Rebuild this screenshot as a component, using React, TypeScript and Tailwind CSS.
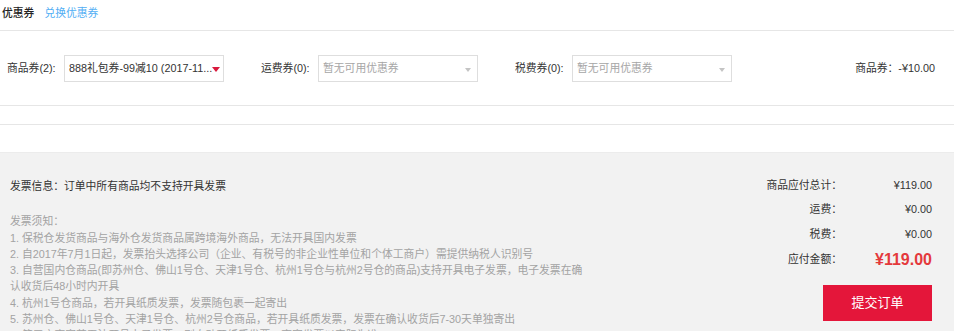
import React from 'react';

const FONT = { fontFamily: '"Liberation Sans", Arial, "Noto Sans CJK SC", sans-serif' };

interface CouponSelectProps {
  label: string;
  value?: string;
  placeholder?: string;
  active?: boolean;
}

function CouponSelect({ label, value, placeholder, active }: CouponSelectProps) {
  return (
    <div className="flex w-[254px] items-center">
      <span className="w-[57px] shrink-0 text-[#333]">{label}</span>
      <div className="relative flex h-[27px] w-[160px] items-center border border-[#dedede] bg-white pl-[4px]">
        {value ? (
          <span className="whitespace-nowrap text-[#333]">{value}</span>
        ) : (
          <span className="whitespace-nowrap text-[#a6a6a6]">{placeholder}</span>
        )}
        {active ? (
          <span className="absolute right-[3px] top-[11px] h-0 w-0 border-x-[4px] border-t-[5px] border-x-transparent border-t-[#d9193d]" />
        ) : (
          <span className="absolute right-[6px] top-[12px] h-0 w-0 border-x-[3px] border-t-[4px] border-x-transparent border-t-[#c4c4c4]" />
        )}
      </div>
    </div>
  );
}

const notes = [
  '发票须知：',
  '1. 保税仓发货商品与海外仓发货商品属跨境海外商品，无法开具国内发票',
  '2. 自2017年7月1日起，发票抬头选择公司（企业、有税号的非企业性单位和个体工商户）需提供纳税人识别号',
  '3. 自营国内仓商品(即苏州仓、佛山1号仓、天津1号仓、杭州1号仓与杭州2号仓的商品)支持开具电子发票，电子发票在确',
  '认收货后48小时内开具',
  '4. 杭州1号仓商品，若开具纸质发票，发票随包裹一起寄出',
  '5. 苏州仓、佛山1号仓、天津1号仓、杭州2号仓商品，若开具纸质发票，发票在确认收货后7-30天单独寄出',
  '6. 第三方商家若无法开具电子发票，则自动开纸质发票，商家发票以实际为准',
];

const summary = [
  { label: '商品应付总计：', value: '¥119.00' },
  { label: '运费：', value: '¥0.00' },
  { label: '税费：', value: '¥0.00' },
];

export default function App() {
  return (
    <div className="h-[331px] w-[954px] overflow-hidden bg-white text-[10.8px]" style={FONT}>
      {/* header */}
      <div className="flex h-[31px] items-center gap-[10px] border-b border-[#e6e6e6] pb-[3px] pl-[2px]">
        <span className="font-medium text-[#222]">优惠券</span>
        <a className="text-[#51aef4]">兑换优惠券</a>
      </div>

      {/* coupon selects */}
      <div className="flex h-[75px] items-center border-b border-[#e6e6e6] pl-[7px] pr-[19px]">
        <CouponSelect label="商品券(2):" value="888礼包券-99减10 (2017-11..." active />
        <CouponSelect label="运费券(0):" placeholder="暂无可用优惠券" />
        <CouponSelect label="税费券(0):" placeholder="暂无可用优惠券" />
        <span className="ml-auto text-[#333]">商品券：-¥10.00</span>
      </div>
      <div className="h-[19px] border-b border-[#e6e6e6]" />

      {/* invoice + summary */}
      <div className="mt-[27px] flex h-[200px] justify-between border-t border-[#ececec] bg-[#f2f2f2]">
        <div className="pl-[10px] pt-[25px] leading-[16.3px]">
          <div className="mb-[19px] text-[#333]">发票信息：订单中所有商品均不支持开具发票</div>
          {notes.map((n, i) => (
            <div key={i} className="whitespace-nowrap text-[#a3a3a3]">
              {n}
            </div>
          ))}
        </div>

        <div className="flex flex-col items-end pr-[22px] pt-[19.5px]">
          {summary.map((s) => (
            <div key={s.label} className="flex h-[24.5px] items-center text-[#333]">
              <span className="text-right">{s.label}</span>
              <span className="w-[90px] text-right">{s.value}</span>
            </div>
          ))}
          <div className="flex h-[27px] items-center text-[#333]">
            <span className="text-right">应付金额：</span>
            <span className="w-[90px] text-right text-[16px] font-bold text-[#e4393c]">¥119.00</span>
          </div>
          <button className="mt-[12px] h-[36px] w-[109px] bg-[#e4163a] text-[13px] text-white">提交订单</button>
        </div>
      </div>
    </div>
  );
}
